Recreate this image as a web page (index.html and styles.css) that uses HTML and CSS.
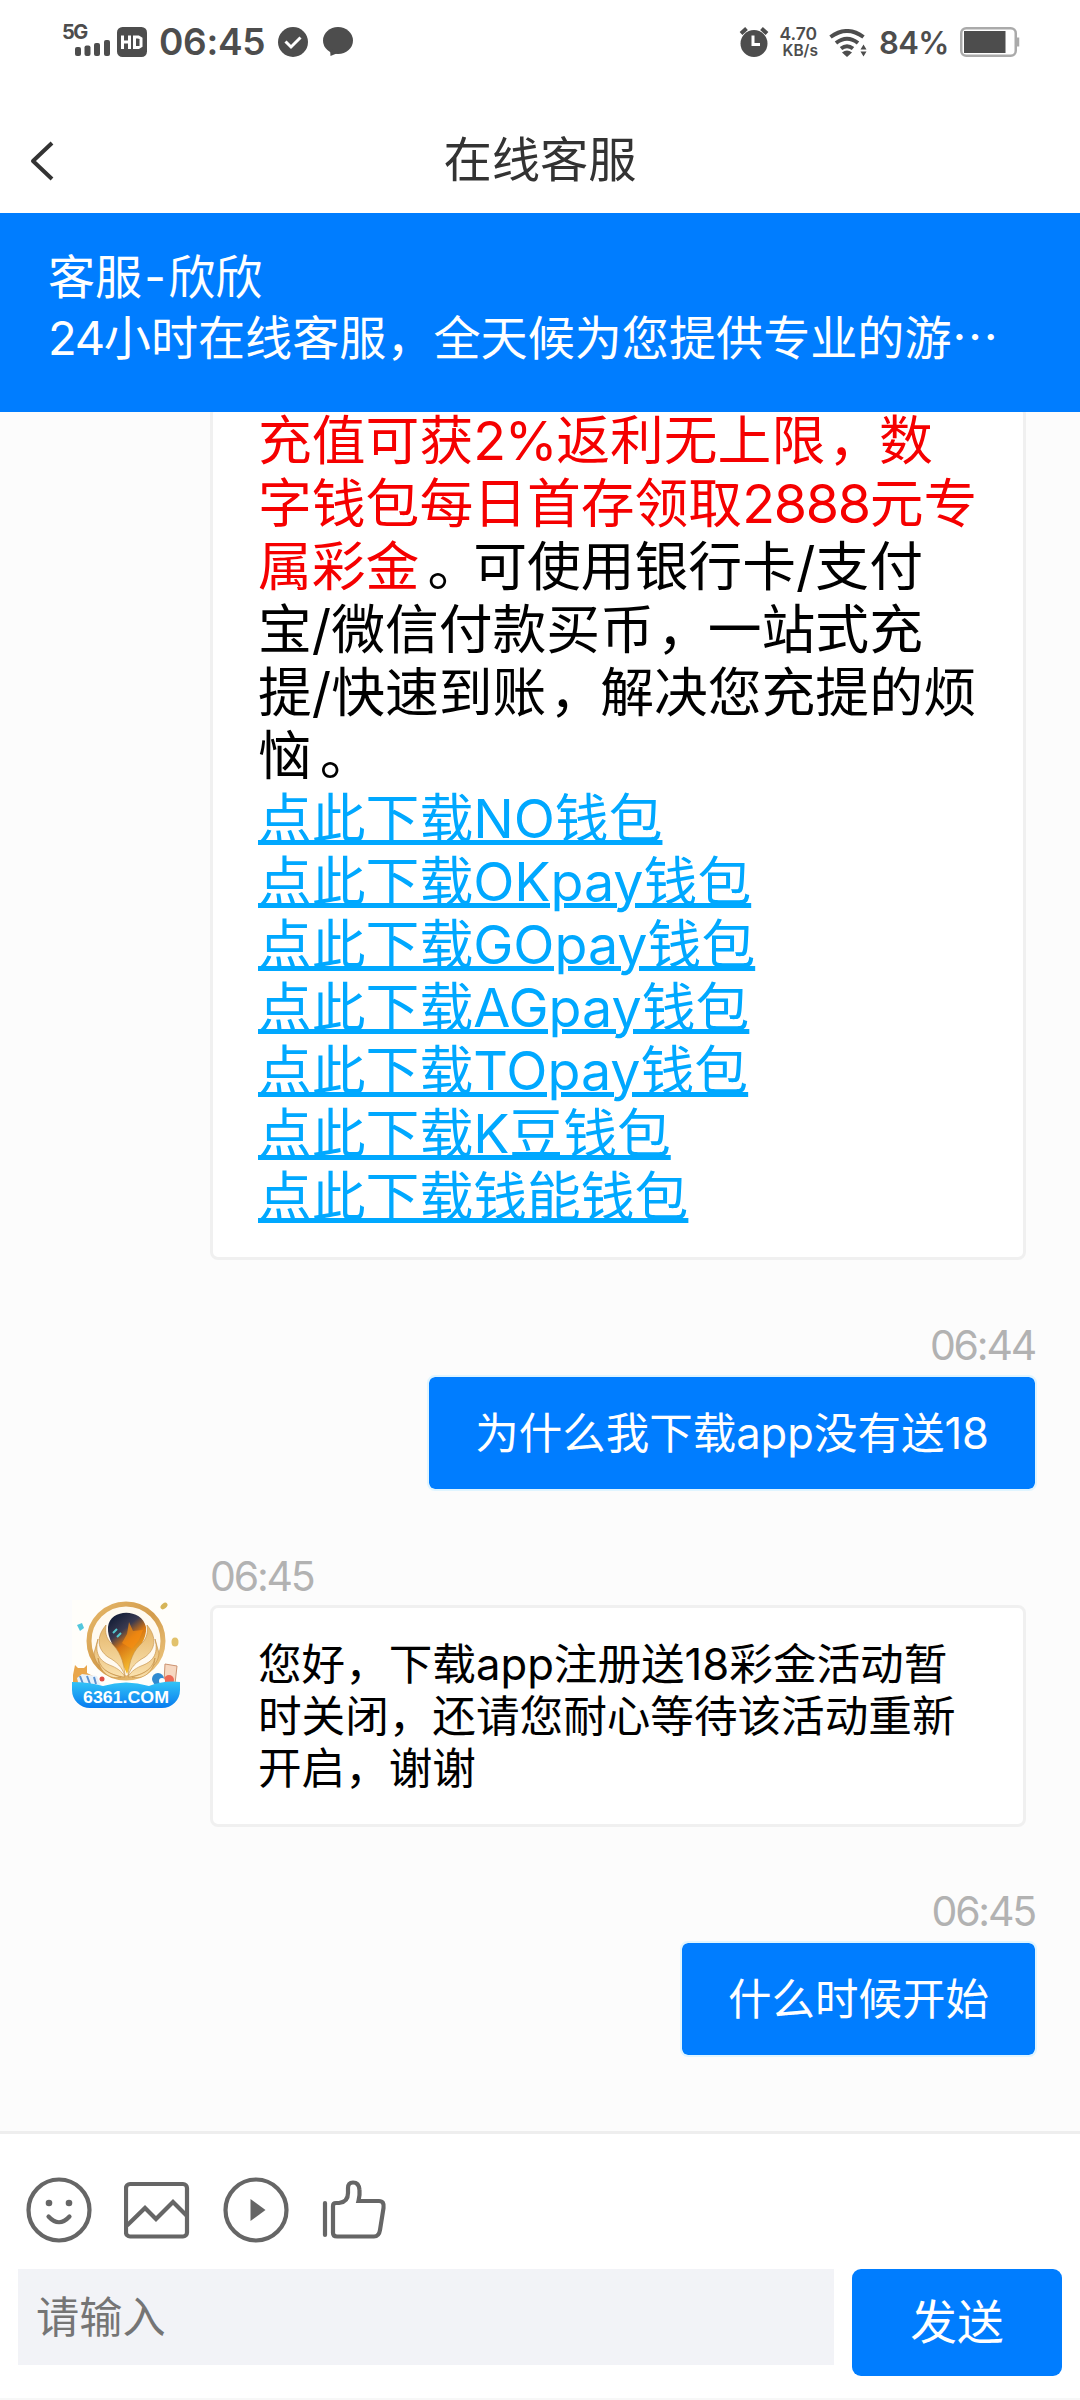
FILE: index.html
```html
<!DOCTYPE html>
<html lang="zh-CN">
<head>
<meta charset="utf-8">
<title>在线客服</title>
<link rel="stylesheet" href="styles.css">
</head>
<body>
<div class="screen">
  <div class="status">
    <div class="status-left">
      <div class="signal">
        <span class="net">5G</span>
        <svg class="bars" width="36" height="16" viewBox="0 0 36 16"><rect x="0" y="7" width="6" height="9" rx="2"/><rect x="9.500" y="5.500" width="6" height="10.500" rx="2"/><rect x="19" y="3" width="6" height="13" rx="2"/><rect x="29" y="0" width="6" height="16" rx="2"/></svg>
      </div>
      <svg width="30" height="30" viewBox="0 0 30 30"><rect width="30" height="30" rx="5.500"/><path d="M5.500 8.500V22M12.500 8.500V22M5.500 15H12.500M17.500 10V20.500H21.500L24 19V11.500L21.500 10Z" fill="none" stroke="#fff" stroke-width="3"/></svg>
      <span class="clock">06:45</span>
      <svg class="check" width="30" height="30" viewBox="0 0 30 30"><circle cx="15" cy="15" r="15"/><path d="M7.500 14.500L13 20L22.500 10.500" fill="none" stroke="#fff" stroke-width="3"/></svg>
      <svg width="30" height="30" viewBox="0 0 30 30"><ellipse cx="15" cy="13.500" rx="15" ry="13.500"/><path d="M7 22L7.500 29L16 25.500Z"/></svg>
    </div>
    <div class="status-right">
      <svg class="alarm" width="30" height="30" viewBox="0 0 30 30"><circle cx="15" cy="16.500" r="13.500"/><path d="M2 6.500L7.500 1.500M22.500 1.500L28 6.500" stroke="#4d4d4d" stroke-width="4"/><path d="M14 8.500V17.500H21" fill="none" stroke="#fff" stroke-width="3"/></svg>
      <div class="speed"><span class="rate">4.70</span><span class="unit">KB/s</span></div>
      <svg class="wifi" width="38" height="28" viewBox="0 0 38 28"><g fill="none" stroke="#4d4d4d" stroke-width="4"><path d="M1.500 8Q18 -4 34.500 8"/><path d="M7 14Q18 5.500 29 14"/><path d="M12 19.500Q18 15 24 19.500"/></g><path d="M13 23.500Q18 19.500 23 23.500L18 28Z"/><path d="M31.500 20.500L34.500 15.500L37.500 20.500ZM31.500 22.500L34.500 27.500L37.500 22.500Z"/></svg>
      <span class="percent">84%</span>
      <svg width="60" height="30" viewBox="0 0 60 30"><rect x="1.250" y="1.250" width="54.500" height="27.500" rx="5" fill="#fff" stroke="#aaa" stroke-width="2.500"/><rect x="4" y="4" width="41.500" height="22"/><path d="M58 10.500V19.500" stroke="#aaa" stroke-width="2.500"/></svg>
    </div>
  </div>

  <div class="nav">
    <svg class="back" width="26" height="40" viewBox="0 0 26 40"><path d="M23 2L4 20L23 38" fill="none" stroke="#333" stroke-width="4" stroke-linejoin="round"/></svg>
    <h1 class="title">在线客服</h1>
  </div>

  <div class="agent">
    <div class="agent-name">客服<span class="dash">-</span>欣欣</div>
    <div class="agent-desc"><span class="num">24</span>小时在线客服，全天候为您提供专业的游<span class="dots">…</span></div>
  </div>

  <div class="chat">
    <div class="bubble promo">
      <div class="red">充值可获<span class="num">2%</span>返利无上限<span class="comma">，</span>数</div>
      <div class="red">字钱包每日首存领取<span class="num">2888</span>元专</div>
      <div><span class="red">属彩金</span><span class="stop">。</span>可使用银行卡/支付</div>
      <div>宝/微信付款买币<span class="comma">，</span>一站式充</div>
      <div>提/快速到账<span class="comma">，</span>解决您充提的烦</div>
      <div>恼<span class="stop">。</span></div>
      <div><a class="link">点此下载NO钱包</a></div>
      <div><a class="link">点此下载OKpay钱包</a></div>
      <div><a class="link">点此下载GOpay钱包</a></div>
      <div><a class="link">点此下载AGpay钱包</a></div>
      <div><a class="link">点此下载TOpay钱包</a></div>
      <div><a class="link">点此下载K豆钱包</a></div>
      <div><a class="link">点此下载钱能钱包</a></div>
    </div>

    <div class="sent">
      <div class="time">06:44</div>
      <div class="bubble mine">为什么我下载app没有送18</div>
    </div>

    <div class="received">
      <svg class="avatar" width="108" height="108" viewBox="0 0 108 108">
        <defs>
          <linearGradient id="gold" x1="0" y1="0" x2="1" y2="1"><stop offset="0" stop-color="#e6b869"/><stop offset=".5" stop-color="#d39c4c"/><stop offset="1" stop-color="#f0cb84"/></linearGradient>
          <linearGradient id="wing" x1="0" y1="0" x2="0" y2="1"><stop offset="0" stop-color="#e3b468"/><stop offset="1" stop-color="#fbe3b0"/></linearGradient>
          <linearGradient id="flame" x1=".2" y1="0" x2=".7" y2="1"><stop offset="0" stop-color="#101b35"/><stop offset=".3" stop-color="#3a3a50"/><stop offset=".5" stop-color="#d77512"/><stop offset="1" stop-color="#ffd43b"/></linearGradient>
          <linearGradient id="sea" x1="0" y1="0" x2="0" y2="1"><stop offset="0" stop-color="#32c4f7"/><stop offset="1" stop-color="#087bef"/></linearGradient>
        </defs>
        <rect width="108" height="95" fill="#fffefa"/>
        <circle cx="54" cy="41" r="37" fill="#fffaf0" stroke="url(#gold)" stroke-width="5"/>
        <path d="M36 27C38 8 70 8 74 27C75 40 67 46 62 55L55 74L47 56C43 47 35 39 36 27Z" fill="url(#flame)"/>
        <path d="M57 22L61 31L71 30L67 40L60 49L50 43L55 34Z" fill="#f78d10" opacity=".7"/>
        <path d="M41 33L45 29M45 37L49 33" stroke="#54c8cf" stroke-width="2"/>
        <g fill="url(#wing)" stroke="#c18b42" stroke-width=".6">
          <path d="M34 25C24 37 25 49 36 57C45 62 50 67 53 76C52 60 47 50 39 43C34 38 33 32 34 25Z"/>
          <path d="M26 39C22 55 29 62 40 66C47 69 51 73 53 77C40 76 23 68 22 53Z"/>
          <path d="M26 58C29 72 42 75 49 77C39 80 27 73 26 58Z"/>
          <path d="M75 25C85 37 84 49 73 57C64 62 59 67 56 76C57 60 62 50 70 43C75 38 76 32 75 25Z"/>
          <path d="M83 39C87 55 80 62 69 66C62 69 58 73 56 77C69 76 86 68 87 53Z"/>
          <path d="M83 58C80 72 67 75 60 77C70 80 82 73 83 58Z"/>
        </g>
        <ellipse cx="92" cy="6" rx="2.500" ry="4" transform="rotate(50 92 6)" fill="#d6b558"/>
        <ellipse cx="103" cy="42" rx="3.500" ry="4.500" fill="#e2c26b"/>
        <path d="M5 25L10 23L12 28L8 31Z" fill="#52c7dd"/>
        <path d="M3 65L6 68H12L15 65V73L25 78V88H1V75Z" fill="#e9a64b"/>
        <path d="M5 78L10 74L25 76L29 86H7Z" fill="#e7f1fa"/><path d="M8 76L11 84M15 76L18 84M22 77L24 84" stroke="#5a91d0" stroke-width="2"/>
        <circle cx="30" cy="79" r="2.500" fill="#dd4e45"/>
        <path d="M93 64L105 66L103 84L92 82Z" fill="#f7d8c0" stroke="#cc9370"/><circle cx="86" cy="79" r="6" fill="#318bd0"/><circle cx="97" cy="80" r="5" fill="#ed6a55"/><circle cx="90" cy="81" r="3" fill="#fff"/>
        <path d="M0 82Q16 82 31 86Q54 79 77 86Q92 80 108 82V90A18 18 0 0 1 90 108H18A18 18 0 0 1 0 90Z" fill="url(#sea)"/>
        <text x="54" y="102.500" text-anchor="middle" textLength="86" lengthAdjust="spacingAndGlyphs" class="avatar-text">6361.COM</text>
      </svg>
      <div class="received-body">
        <div class="time">06:45</div>
        <div class="bubble reply">
          <div>您好，下载app注册送18彩金活动暂</div>
          <div>时关闭，还请您耐心等待该活动重新</div>
          <div>开启，谢谢</div>
        </div>
      </div>
    </div>

    <div class="sent last">
      <div class="time">06:45</div>
      <div class="bubble mine">什么时候开始</div>
    </div>
  </div>

  <div class="composer">
    <div class="tools">
      <svg width="66" height="66" viewBox="0 0 66 66"><circle cx="33" cy="33" r="30.500"/><circle class="solid" cx="23" cy="26" r="3.300"/><circle class="solid" cx="43" cy="26" r="3.300"/><path d="M22.500 39.500Q33 51 43.500 39.500" stroke-linecap="round"/></svg>
      <svg width="66" height="66" viewBox="0 0 66 66"><rect x="2" y="7" width="61" height="52.500" rx="4"/><path d="M3 48.500L21 31L32 42L49 25L63 39"/></svg>
      <svg width="66" height="66" viewBox="0 0 66 66"><circle cx="33" cy="33" r="30.500"/><path class="solid" d="M27.500 22L42.500 33L27.500 44Z"/></svg>
      <svg width="66" height="66" viewBox="0 0 66 66"><path d="M4 26V58" stroke-linecap="round"/><path d="M12 29Q12 26 15 26H18Q27 25 27 16V11Q27 5.500 32 5.500Q38 5.500 38.500 13Q39 18 37.500 24H58Q63.500 24 62.500 31L59 53Q58 59.500 53 59.500H16Q12 59.500 12 56Z"/></svg>
    </div>
    <div class="entry">
      <div class="input">请输入</div>
      <div class="send">发送</div>
    </div>
  </div>
</div>
</body>
</html>
```

FILE: styles.css
```css
* { box-sizing: border-box; }
body {
  margin: 0;
  background: #fff;
  font-family: Inter, "Noto Sans CJK SC", sans-serif;
  font-feature-settings: "calt" 0;
}
.screen {
  width: 1080px;
  height: 2400px;
  display: flex;
  flex-direction: column;
  overflow: hidden;
}

/* status bar */
.status {
  height: 106px;
  flex: none;
  padding: 27px 60px 0 62px;
  display: flex;
  justify-content: space-between;
  align-items: flex-start;
  color: #4d4d4d;
  fill: #4d4d4d;
}
.status svg { display: block; flex: none; }
.status-left, .status-right { display: flex; height: 30px; align-items: center; white-space: nowrap; }
.signal { width: 55px; height: 34px; display: flex; flex-direction: column; }
.net { font-size: 20px; line-height: 15px; font-weight: 700; letter-spacing: -1.5px; }
.bars { margin-left: 13px; }
.clock { width: 104px; margin: 0 15px 0 12px; font-size: 37px; line-height: 30px; font-weight: 600; letter-spacing: -0.3px; }
.check { margin-right: 15px; }
.alarm { margin-right: 6px; }
.speed { width: 43px; height: 34px; display: flex; flex-direction: column; font-weight: 600; text-align: right; }
.rate { font-size: 17.5px; line-height: 18px; padding-right: 1px; }
.unit { font-size: 15.5px; line-height: 16px; }
.wifi { margin: 1px 12px 0 11px; }
.percent { width: 69px; margin-right: 12px; font-size: 31px; line-height: 30px; font-weight: 600; letter-spacing: -0.6px; padding-top: 2px; }

/* title bar */
.nav { height: 107px; flex: none; display: grid; grid-template-columns: 1fr auto 1fr; align-items: center; }
.back { margin: 2px 0 0 29px; }
.title { margin: 0; font-size: 48.3px; line-height: 60px; font-weight: 400; color: #333; }

/* agent banner */
.agent { height: 199px; flex: none; background: #007dff; color: #fff; padding: 35px 48px 0; font-size: 47.1px; line-height: 58px; white-space: nowrap; }
.agent-name, .agent-desc { height: 58px; }
.dash { display: inline-block; width: 26px; text-align: center; }
.dots { font-family: "Noto Sans CJK SC", sans-serif; }
.num { letter-spacing: -1.3px; }
.comma { margin: 0 -3px 0 3px; }
.stop { margin: 0 -8px 0 8px; }

/* conversation */
.chat {
  height: 1722px;
  flex: none;
  overflow: hidden;
  background: #fcfcfc;
  border-bottom: 3px solid #eee;
  display: flex;
  flex-direction: column;
  justify-content: flex-end;
}
.bubble { flex: none; border: 3px solid #f0f0f0; border-radius: 8px; background: #fff; color: #000; white-space: nowrap; }
.promo { width: 816px; margin-left: 210px; padding: 0 0 29px 45px; font-size: 53.8px; line-height: 63px; }
.promo > div { height: 63px; }
.red { color: #f50000; }
.link { color: #00a8ff; text-decoration: underline; text-decoration-thickness: 5px; text-underline-offset: 1.5px; }
.time { font-size: 41px; line-height: 50px; color: #b2b2b2; letter-spacing: -2.2px; }
.sent { flex: none; margin-top: 60px; padding-right: 43px; display: flex; flex-direction: column; align-items: flex-end; }
.sent .time { margin-right: 2px; }
.mine {
  margin: 5px 0 0;
  height: 116px;
  border: 2px solid #e0f5ff;
  padding: 0 46px;
  background: #007dff;
  background-clip: padding-box;
  color: #fff;
  font-size: 43.5px;
  line-height: 112px;
}
.received { flex: none; margin-top: 60px; padding-left: 72px; display: flex; gap: 30px; }
.avatar { margin-top: 49px; flex: none; }
.avatar-text { font: 700 17px "Liberation Sans", sans-serif; fill: #fff; }
.reply { width: 816px; height: 222px; margin-top: 4px; padding: 31px 0 0 45px; font-size: 43.6px; line-height: 52px; }
.reply > div { height: 52px; }
.last { margin-top: 59px; padding-bottom: 74px; }

/* composer */
.composer { height: 266px; flex: none; border-bottom: 2px solid #f7f7f7; padding: 43px 18px 0; }
.tools { display: flex; gap: 32.500px; padding-left: 7.500px; height: 92px; }
.tools svg { fill: none; stroke: #666; stroke-width: 4.200; }
.tools .solid { fill: #666; stroke: none; }
.entry { display: flex; justify-content: space-between; align-items: flex-start; }
.input { width: 816px; height: 96px; padding-left: 18px; background: #f2f3f7; color: #757575; font-size: 43.200px; line-height: 96px; }
.send { width: 210px; height: 107px; border-radius: 9px; background: #007dff; color: #fff; font-size: 46.700px; line-height: 107px; text-align: center; }
```
